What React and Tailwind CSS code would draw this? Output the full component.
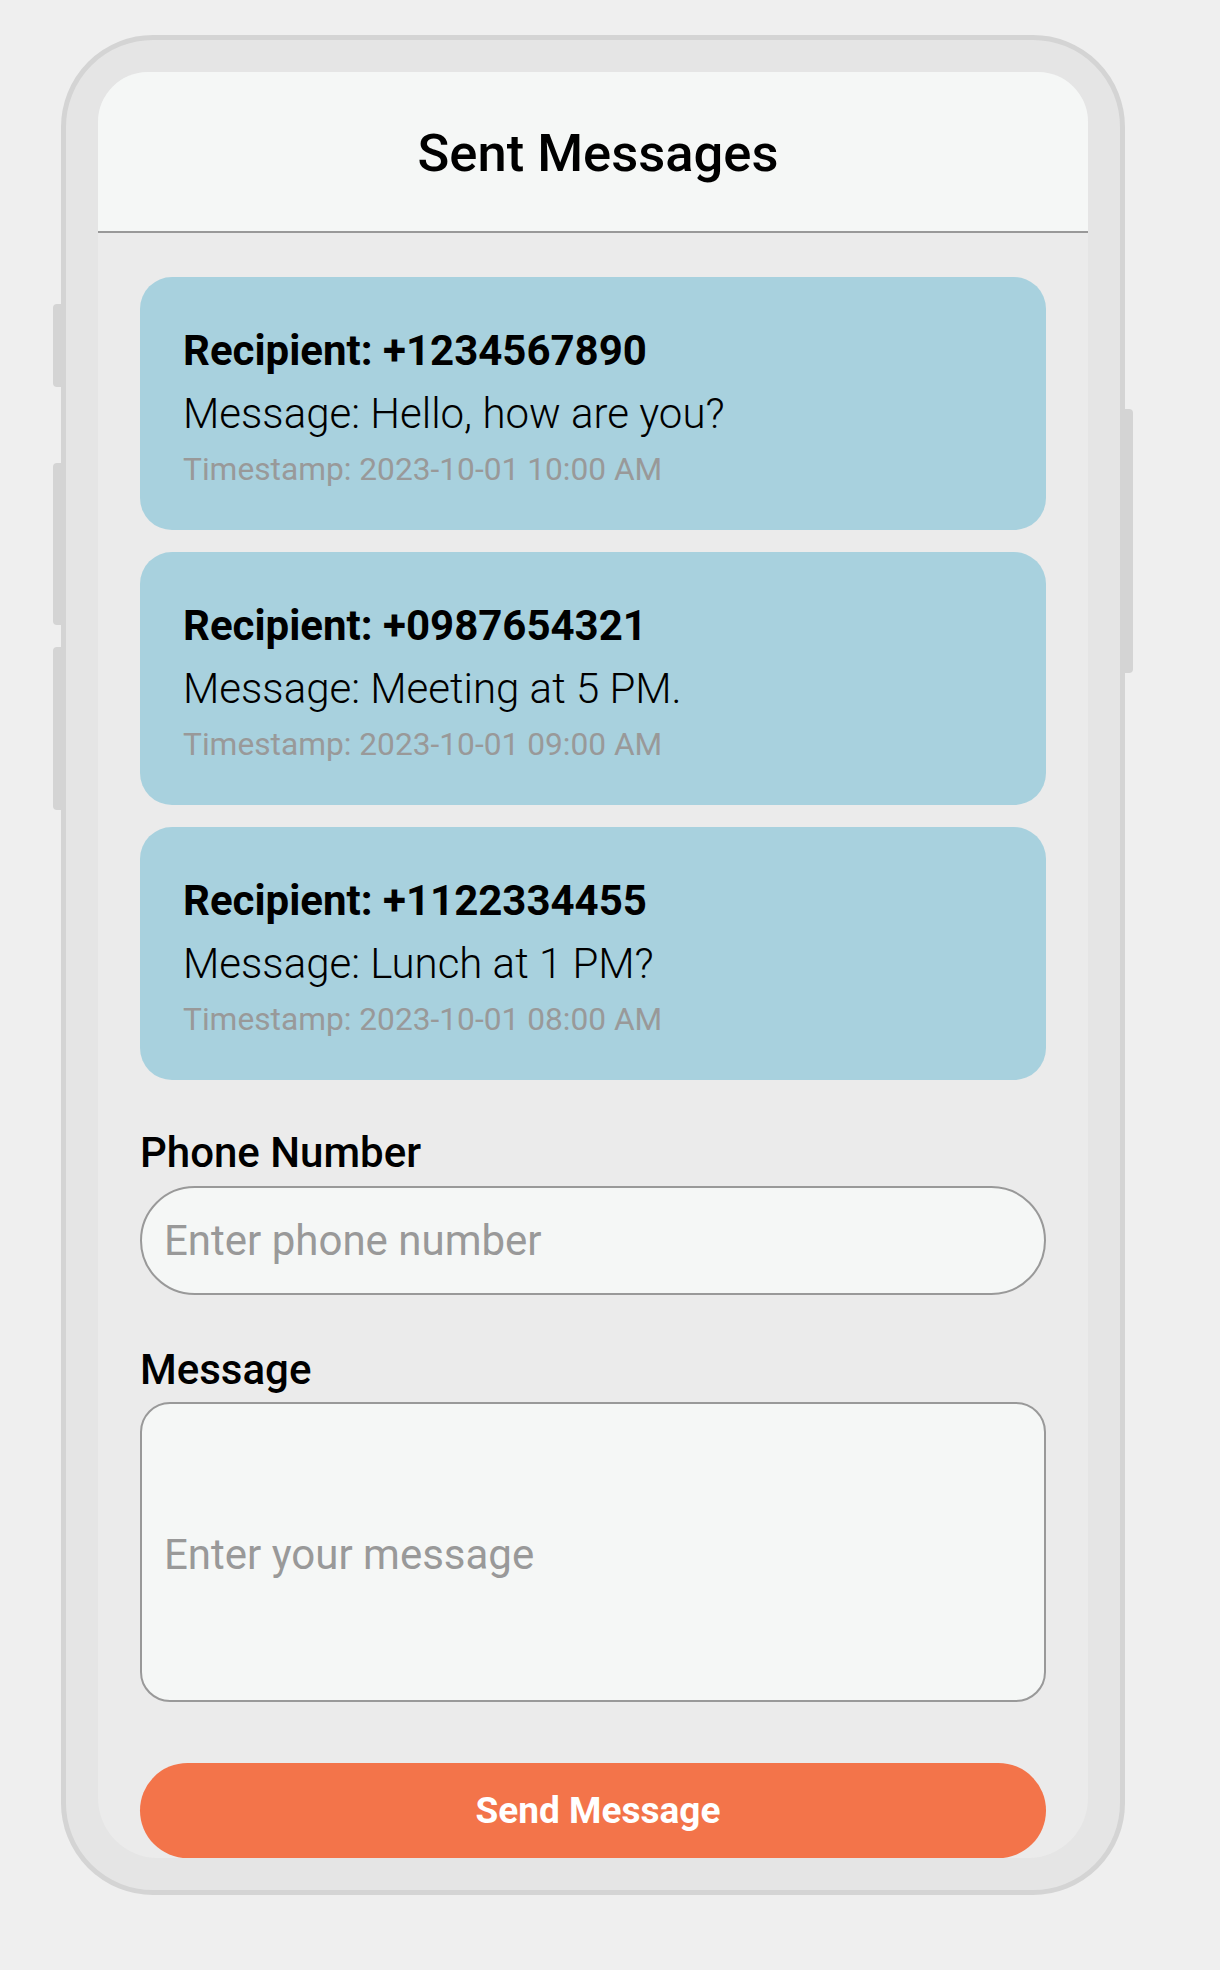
import React from 'react';

const messages = [
  { recipient: '+1234567890', message: 'Hello, how are you?', timestamp: '2023-10-01 10:00 AM' },
  { recipient: '+0987654321', message: 'Meeting at 5 PM.', timestamp: '2023-10-01 09:00 AM' },
  { recipient: '+1122334455', message: 'Lunch at 1 PM?', timestamp: '2023-10-01 08:00 AM' },
];

const MessageCard = ({ item }) => (
  <div className="flex flex-col gap-[14px] bg-[#a8d1de] rounded-[32px] px-[43px] pt-[49px] pb-[42px]">
    <div className="text-[42px] leading-[50px] font-bold text-black">Recipient: {item.recipient}</div>
    <div className="text-[42px] leading-[48px] font-light text-black">Message: {item.message}</div>
    <div className="text-[31.7px] leading-[36px] text-[#999999]">Timestamp: {item.timestamp}</div>
  </div>
);

export default function App() {
  return (
    <div className="min-h-[1970px] bg-[#efefef] pt-[35px] pl-[61px]" style={{ fontFamily: 'Roboto, "Noto Sans", sans-serif' }}>
      <div className="relative w-[1064px] h-[1860px] border-[5px] border-[#d4d4d4] bg-[#e5e5e5] rounded-[92px] p-[32px]">
        {/* side buttons */}
        <div className="absolute left-[-13px] top-[264px] w-[9px] h-[83px] bg-[#d4d4d4] rounded-l-[4px]" />
        <div className="absolute left-[-13px] top-[423px] w-[9px] h-[162px] bg-[#d4d4d4] rounded-l-[4px]" />
        <div className="absolute left-[-13px] top-[607px] w-[9px] h-[163px] bg-[#d4d4d4] rounded-l-[4px]" />
        <div className="absolute right-[-13px] top-[369px] w-[8px] h-[264px] bg-[#d4d4d4] rounded-r-[4px]" />

        <div className="h-full bg-[#ebebeb] rounded-t-[50px] rounded-b-[60px] overflow-hidden flex flex-col">
          <div className="h-[161px] shrink-0 bg-[#f5f7f6] border-b-2 border-[#999999] flex items-center justify-center pt-[4px] pl-[10px]">
            <h1 className="text-[52.5px] font-medium text-black">Sent Messages</h1>
          </div>

          <div className="flex flex-col px-[42px] pt-[44px]">
            <div className="flex flex-col gap-[22px]">
              {messages.map((m) => (
                <MessageCard key={m.recipient} item={m} />
              ))}
            </div>

            <div className="flex flex-col gap-[9px] mt-[48px]">
              <label className="text-[42px] leading-[49px] font-medium text-black">Phone Number</label>
              <input
                type="text"
                placeholder="Enter phone number"
                className="w-full h-[109px] rounded-full border-2 border-[#999999] bg-[#f5f7f6] pl-[22px] text-[42px] text-black placeholder:text-[#999999] outline-none"
              />
            </div>

            <div className="flex flex-col gap-[8px] mt-[50px]">
              <label className="text-[42px] leading-[49px] font-medium text-black">Message</label>
              <textarea
                placeholder="Enter your message"
                className="w-full h-[300px] rounded-[30px] border-2 border-[#999999] bg-[#f5f7f6] pl-[22px] pt-[126px] text-[42px] leading-[49px] text-black placeholder:text-[#999999] outline-none resize-none"
              />
            </div>

            <button className="mt-[61px] w-full h-[95px] rounded-full bg-[#f3744a] pl-[10px] text-white text-[37px] font-bold">
              Send Message
            </button>
          </div>
        </div>
      </div>
    </div>
  );
}
